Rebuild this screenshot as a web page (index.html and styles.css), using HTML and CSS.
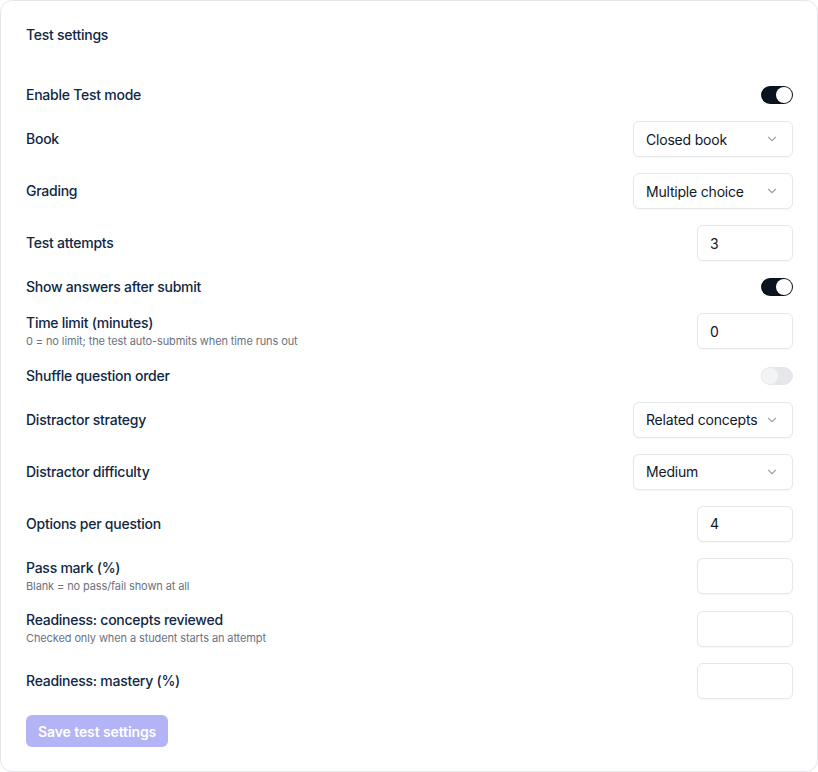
FILE: index.html
```html
<!DOCTYPE html>
<html lang="en">
<head>
<meta charset="utf-8">
<title>Test settings</title>
<link rel="stylesheet" href="styles.css">
</head>
<body>
<div class="card">
  <h2 class="title">Test settings</h2>
  <div class="rows">
    <div class="row">
      <div class="label"><span class="name">Enable Test mode</span></div>
      <span class="toggle on"><span class="thumb"></span></span>
    </div>
    <div class="row">
      <div class="label"><span class="name">Book</span></div>
      <div class="select">
        <select><option>Closed book</option></select>
        <svg class="chev" viewBox="0 0 16 16" width="14" height="14"><path d="M4 6l4 4 4-4" fill="none" stroke="#9ca3af" stroke-width="1.3" stroke-linecap="round" stroke-linejoin="round"/></svg>
      </div>
    </div>
    <div class="row">
      <div class="label"><span class="name">Grading</span></div>
      <div class="select">
        <select><option>Multiple choice</option></select>
        <svg class="chev" viewBox="0 0 16 16" width="14" height="14"><path d="M4 6l4 4 4-4" fill="none" stroke="#9ca3af" stroke-width="1.3" stroke-linecap="round" stroke-linejoin="round"/></svg>
      </div>
    </div>
    <div class="row">
      <div class="label"><span class="name">Test attempts</span></div>
      <input class="num" type="text" value="3">
    </div>
    <div class="row">
      <div class="label"><span class="name">Show answers after submit</span></div>
      <span class="toggle on"><span class="thumb"></span></span>
    </div>
    <div class="row">
      <div class="label"><span class="name">Time limit (minutes)</span><span class="hint">0 = no limit; the test auto-submits when time runs out</span></div>
      <input class="num" type="text" value="0">
    </div>
    <div class="row">
      <div class="label"><span class="name">Shuffle question order</span></div>
      <span class="toggle off"><span class="thumb"></span></span>
    </div>
    <div class="row">
      <div class="label"><span class="name">Distractor strategy</span></div>
      <div class="select">
        <select><option>Related concepts</option></select>
        <svg class="chev" viewBox="0 0 16 16" width="14" height="14"><path d="M4 6l4 4 4-4" fill="none" stroke="#9ca3af" stroke-width="1.3" stroke-linecap="round" stroke-linejoin="round"/></svg>
      </div>
    </div>
    <div class="row">
      <div class="label"><span class="name">Distractor difficulty</span></div>
      <div class="select">
        <select><option>Medium</option></select>
        <svg class="chev" viewBox="0 0 16 16" width="14" height="14"><path d="M4 6l4 4 4-4" fill="none" stroke="#9ca3af" stroke-width="1.3" stroke-linecap="round" stroke-linejoin="round"/></svg>
      </div>
    </div>
    <div class="row">
      <div class="label"><span class="name">Options per question</span></div>
      <input class="num" type="text" value="4">
    </div>
    <div class="row">
      <div class="label"><span class="name">Pass mark (%)</span><span class="hint">Blank = no pass/fail shown at all</span></div>
      <input class="num" type="text" value="">
    </div>
    <div class="row">
      <div class="label"><span class="name">Readiness: concepts reviewed</span><span class="hint">Checked only when a student starts an attempt</span></div>
      <input class="num" type="text" value="">
    </div>
    <div class="row">
      <div class="label"><span class="name">Readiness: mastery (%)</span></div>
      <input class="num" type="text" value="">
    </div>
    <div class="actions">
      <button class="save" type="button" disabled>Save test settings</button>
    </div>
  </div>
</div>
</body>
</html>
```

FILE: styles.css
```css
* { box-sizing: border-box; }
html, body { margin: 0; padding: 0; background: #ffffff; }
body {
  font-family: Inter, "Noto Sans", sans-serif;
  color: #0f2744;
  width: 818px;
  height: 772px;
}
.card {
  width: 818px;
  height: 772px;
  border: 1px solid #e5e7eb;
  border-radius: 12px;
  padding: 24px 24px 24px 25px;
  background: #fff;
}
.title {
  margin: 0 0 24px;
  font-size: 14px;
  line-height: 20px;
  font-weight: 500;
  letter-spacing: -0.25px;
  color: #0f2744;
}
.rows {
  display: flex;
  flex-direction: column;
  gap: 16px;
  padding-top: 16px;
}
.row {
  display: flex;
  align-items: center;
  justify-content: space-between;
}
.label {
  display: flex;
  flex-direction: column;
}
.name {
  font-size: 14px;
  line-height: 20px;
  font-weight: 500;
  letter-spacing: -0.25px;
  color: #0f2744;
}
.hint {
  font-size: 11px;
  line-height: 16.7px;
  letter-spacing: -0.11px;
  color: #6b7280;
}
.toggle {
  width: 32px;
  height: 18px;
  border-radius: 9px;
  display: flex;
  align-items: center;
  padding: 1px;
}
.toggle.on { background: #0b1220; justify-content: flex-end; }
.toggle.off { background: #e5e7eb; justify-content: flex-start; }
.thumb {
  width: 16px;
  height: 16px;
  border-radius: 50%;
  background: #ffffff;
}
.toggle.off .thumb { background: #f3f4f6; }
.select {
  position: relative;
  width: 160px;
  height: 36px;
}
.select select {
  appearance: none;
  -webkit-appearance: none;
  width: 100%;
  height: 100%;
  border: 1px solid #e5e7eb;
  border-radius: 6px;
  background: #fff;
  padding: 0 28px 0 12px;
  font-family: Inter, "Noto Sans", sans-serif;
  font-size: 14px;
  letter-spacing: -0.2px;
  color: #111827;
  box-shadow: 0 1px 2px rgba(0,0,0,0.04);
}
.chev {
  position: absolute;
  right: 14px;
  top: 11px;
  pointer-events: none;
}
.num {
  width: 96px;
  height: 36px;
  border: 1px solid #e5e7eb;
  border-radius: 6px;
  padding: 0 12px;
  font-family: Inter, "Noto Sans", sans-serif;
  font-size: 14px;
  color: #111827;
  background: #fff;
  box-shadow: 0 1px 2px rgba(0,0,0,0.04);
  outline: none;
}
.actions { display: flex; }
.save {
  height: 32px;
  padding: 0 12px;
  border: none;
  border-radius: 6px;
  background: #b3b4f5;
  color: #ffffff;
  font-family: Inter, "Noto Sans", sans-serif;
  font-size: 14px;
  font-weight: 600;
  letter-spacing: -0.1px;
}
```
